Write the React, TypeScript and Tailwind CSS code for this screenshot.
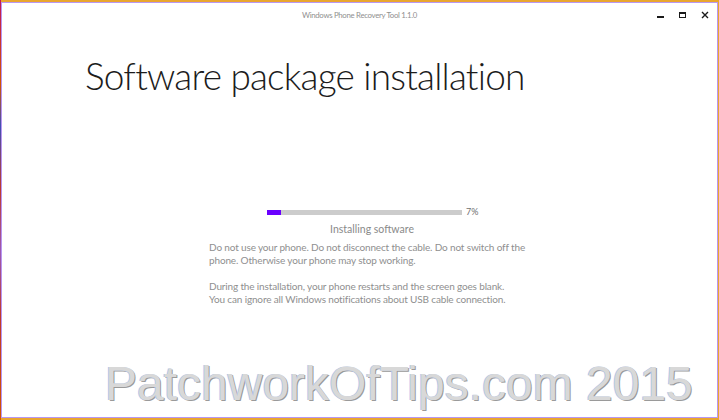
import React from "react";

export default function App() {
  return (
    <div className="relative w-[719px] h-[420px] overflow-hidden bg-[#e9a62f] pt-[2px] pl-[1px] pr-[1px] pb-[2px] flex">
      <div className="absolute left-0 top-0 w-[1px] h-full bg-[linear-gradient(#c2185b,#d35400_20%,#3f51b5_30%,#c0392b_45%,#9b59b6_60%,#c0392b_75%,#d35400)]" />
      <div className="relative flex-1 flex flex-col bg-white border border-[#b897f2] [font-family:Lato,'Open_Sans',sans-serif]">
        <div className="relative h-[24px] flex items-center justify-center">
          <span className="text-[7.8px] tracking-[-0.3px] text-[#8f8f8f] mt-[1px]">Windows Phone Recovery Tool 1.1.0</span>
          <div className="absolute right-0 top-0 h-full flex items-center">
            <div className="w-[22px] h-[24px] flex items-center justify-center">
              <div className="w-[7px] h-[2px] bg-[#1a1a1a] mt-[3px]" />
            </div>
            <div className="w-[22px] h-[24px] flex items-center justify-center">
              <div className="w-[7px] h-[6px] border border-[#1a1a1a] border-t-2" />
            </div>
            <div className="w-[24px] h-[24px] flex items-center justify-center">
              <svg width="8" height="8" viewBox="0 0 8 8">
                <path d="M1 1 L7 7 M7 1 L1 7" stroke="#1a1a1a" strokeWidth="1.4" />
              </svg>
            </div>
          </div>
        </div>
        <h1 className="pl-[83px] pt-[24px] text-[37px] leading-[50px] font-light tracking-[-0.8px] text-[#1c1c1c]">
          Software package installation
        </h1>
        <div className="pl-[207px] pt-[107px] flex flex-col">
          <div className="flex items-center pl-[58px] h-[8px]">
            <div className="w-[195px] h-[5px] bg-[#cccccc] flex">
              <div className="w-[14px] h-full bg-[#6a00ff]" />
            </div>
            <span className="ml-[4px] text-[9px] text-[#6f6f6f]">7%</span>
          </div>
          <div className="w-[326px] text-center text-[10.5px] leading-[14px] mt-[6px] text-[#8a8a8a]">
            Installing software
          </div>
          <div className="mt-[5px] text-[10px] tracking-[-0.15px] leading-[12.5px] text-[#8f8f8f] whitespace-nowrap">
            Do not use your phone. Do not disconnect the cable. Do not switch off the
            <br />
            phone. Otherwise your phone may stop working.
          </div>
          <div className="mt-[14px] text-[10px] tracking-[-0.15px] leading-[12.5px] text-[#8f8f8f] whitespace-nowrap">
            During the installation, your phone restarts and the screen goes blank.
            <br />
            You can ignore all Windows notifications about USB cable connection.
          </div>
        </div>
        <div className="absolute left-[103px] top-[353px] text-[48px] leading-[56px] text-[#d8d8d8] whitespace-nowrap [font-family:'Liberation_Sans',Arial,sans-serif] [text-shadow:-1px_0_0_#b4c8ee,1px_1px_0_#9a9a9a]">
          PatchworkOfTips.com 2015
        </div>
      </div>
    </div>
  );
}
